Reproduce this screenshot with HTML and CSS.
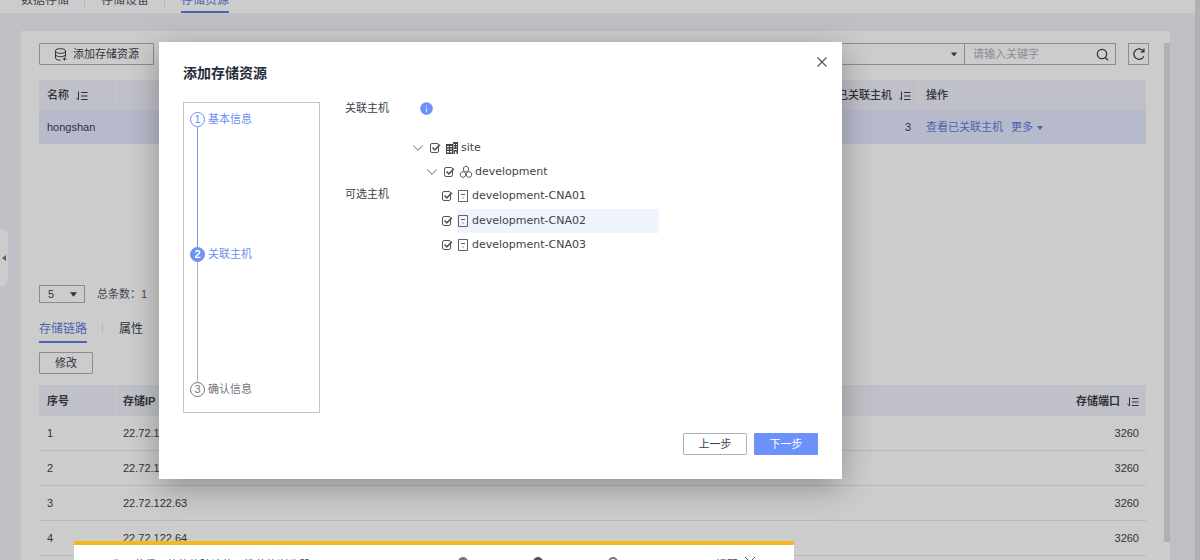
FILE: index.html
```html
<!DOCTYPE html>
<html lang="zh-CN">
<head>
<meta charset="utf-8">
<title>存储资源</title>
<link rel="stylesheet" href="styles.css">
</head>
<body>
<svg class="defs" aria-hidden="true">
  <symbol id="sort" viewBox="0 0 12 10"><path d="M2.5 0.5v8.5L0.3 6.8M5 1.5h6.5M5 5h6.5M5 8.5h6.5" fill="none" stroke="currentColor"/></symbol>
  <symbol id="caret" viewBox="0 0 6 4"><path d="M0 0h6L3 4z" fill="currentColor"/></symbol>
  <symbol id="chevron" viewBox="0 0 12 8"><path d="M1.2 1.5L6 6.3l4.8-4.8" fill="none" stroke="currentColor"/></symbol>
  <symbol id="host" viewBox="0 0 12 14"><path d="M1.5 1.5h9v11h-9z" fill="none" stroke="currentColor"/><path d="M4 5.5h4M5.4 9h1.2" fill="none" stroke="currentColor"/></symbol>
</svg>
<div class="page">
  <nav class="top-tabs">
    <a href="#data">数据存储</a><a href="#device">存储设备</a><a href="#resource" class="active">存储资源</a>
  </nav>
  <main class="workspace">
    <section class="panel">
      <div class="toolbar">
        <button class="btn add" type="button">
          <svg width="13" height="13" viewBox="0 0 13 13" fill="none" stroke="currentColor"><ellipse cx="6.5" cy="3" rx="5" ry="2.3"/><path d="M1.5 3v7c0 1.2 2 2.2 5 2.2M11.500 3v6M1.500 6.500c0 1.200 2.200 2.200 5 2.200s5-1 5-2.200M8.500 11h4M10.500 9.500v3"/></svg>
          添加存储资源
        </button>
        <div class="search">
          <button class="filter" type="button" aria-label="筛选条件"><svg width="6" height="5"><use href="#caret"/></svg></button>
          <label class="query"><input type="text" placeholder="请输入关键字" aria-label="关键字"><svg width="13" height="13" viewBox="0 0 13 13" fill="none" stroke="currentColor" stroke-width="1.200"><circle cx="6" cy="6" r="4.700"/><path d="M9.300 9.500l2.800 2.700"/></svg></label>
        </div>
        <button class="refresh" type="button" aria-label="刷新"><svg width="14" height="14" viewBox="0 0 14 14" fill="none" stroke="currentColor" stroke-width="1.200"><path d="M11.800 9.200a5.200 5.200 0 1 1-.3-4.800M12 1.500v3.300H8.600"/></svg></button>
      </div>
      <div class="upper">
        <table class="grid resources">
          <thead><tr><th>名称<svg class="sort" width="12" height="10"><use href="#sort"/></svg></th><th class="num">已关联主机<svg class="sort" width="12" height="10"><use href="#sort"/></svg></th><th class="ops">操作</th></tr></thead>
          <tbody><tr><td>hongshan</td><td class="num">3</td><td class="ops"><a href="#hosts">查看已关联主机</a><a href="#more">更多<svg class="more" width="6" height="4"><use href="#caret"/></svg></a></td></tr></tbody>
        </table>
      </div>
      <div class="pager">
        <button class="size" type="button">5<svg width="7" height="5"><use href="#caret"/></svg></button>
        <span>总条数：1</span>
      </div>
      <nav class="sub-tabs"><a href="#links" class="active">存储链路</a><a href="#props">属性</a></nav>
      <button class="btn edit" type="button">修改</button>
      <table class="grid links">
        <thead><tr><th class="index">序号</th><th>存储IP</th><th class="num">存储端口<svg class="sort" width="12" height="10"><use href="#sort"/></svg></th></tr></thead>
        <tbody>
          <tr><td>1</td><td>22.72.122.61</td><td class="num">3260</td></tr>
          <tr><td>2</td><td>22.72.122.62</td><td class="num">3260</td></tr>
          <tr><td>3</td><td>22.72.122.63</td><td class="num">3260</td></tr>
          <tr><td>4</td><td>22.72.122.64</td><td class="num">3260</td></tr>
        </tbody>
      </table>
      <div class="panel-scroll"></div>
    </section>
  </main>
  <div class="page-scroll"></div>
  <button class="handle" type="button" aria-label="展开"><svg width="4" height="6" viewBox="0 0 4 6"><path d="M4 0v6L0 3z" fill="currentColor"/></svg></button>
</div>
<div class="mask"></div>
<div class="dialog" role="dialog" aria-labelledby="dialog-title">
  <header><h1 id="dialog-title">添加存储资源</h1></header>
  <button class="close" type="button" aria-label="关闭"><svg width="10" height="10" viewBox="0 0 10 10"><path d="M.5.5l9 9M9.500.5l-9 9" fill="none" stroke="currentColor" stroke-width="1.200"/></svg></button>
  <div class="content">
    <ol class="steps">
      <li class="done"><span class="dot">1</span>基本信息</li>
      <li class="current"><span class="dot">2</span>关联主机</li>
      <li><span class="dot">3</span>确认信息</li>
    </ol>
    <div class="form">
      <div class="label">关联主机</div>
      <div class="info"><svg width="13" height="13" viewBox="0 0 13 13"><circle cx="6.500" cy="6.500" r="6.300" fill="#6c92fa"/><path d="M6.500 5.500v4.500M6.500 3v1.300" stroke="#d5e0ff" fill="none"/></svg></div>
      <div class="label tree-label">可选主机</div>
      <ul class="tree">
        <li class="level-1"><svg class="fold" width="12" height="8"><use href="#chevron"/></svg><label><input type="checkbox" checked><span class="node"><svg width="14" height="14" viewBox="0 0 14 14"><path d="M1 3h7V1h5v12H1z" fill="#434348"/><path d="M2 5h2v1H2zM5 5h2v1H5zM2 7.500h2v1H2zM5 7.500h2v1H5zM2 10h2v1.500H2zM5 10h2v1.500H5zM9 3h1v1H9zM11 3h1v1h-1zM9 5.500h1v1H9zM11 5.500h1v1h-1zM9 8h3v1H9zM10 10.500h1.500V13H10zM8 2.500h.5V13H8z" fill="#fff"/></svg>site</span></label></li>
        <li class="level-2"><svg class="fold" width="12" height="8"><use href="#chevron"/></svg><label><input type="checkbox" checked><span class="node"><svg width="14" height="14" viewBox="0 0 14 14" fill="none" stroke="currentColor"><path d="M7 1.200l2.500 1.400v3L7 7 4.500 5.600v-3zM4 6.500l2.600 1.500v3L4 12.500 1.400 11V8zM10 6.500l2.600 1.500v3L10 12.500 7.400 11V8z" stroke-linejoin="round"/></svg>development</span></label></li>
        <li class="level-3"><label><input type="checkbox" checked><span class="node"><svg width="12" height="14"><use href="#host"/></svg>development-CNA01</span></label></li>
        <li class="level-3 hovered"><label><input type="checkbox" checked><span class="node"><svg width="12" height="14"><use href="#host"/></svg>development-CNA02</span></label></li>
        <li class="level-3"><label><input type="checkbox" checked><span class="node"><svg width="12" height="14"><use href="#host"/></svg>development-CNA03</span></label></li>
      </ul>
    </div>
  </div>
  <footer><button class="btn step" type="button">上一步</button><button class="btn step primary" type="button">下一步</button></footer>
</div>
<aside class="notice">
  <span class="message">为了获得更佳的体验请使用推荐的浏览器，Chrome、Firefox</span>
  <svg width="10" height="10"><circle cx="5" cy="5" r="5" fill="#777"/></svg>
  <svg width="10" height="10"><circle cx="5" cy="5" r="5" fill="#555"/></svg>
  <svg width="10" height="10"><circle cx="5" cy="5" r="4" fill="none" stroke="#777" stroke-width="2"/></svg>
  <span class="ignore">不再提醒</span>
  <svg width="10" height="10"><path d="M0 0l10 10M10 0L0 10" stroke="#555" fill="none"/></svg>
</aside>
</body>
</html>
```
FILE: styles.css
```css
* { box-sizing: border-box; }
body {
  margin: 0;
  height: 100vh;
  overflow: hidden;
  position: relative;
  color: #3c3f48;
  font: 11px/16px "Liberation Sans", "Noto Sans CJK SC", sans-serif;
}
a { color: inherit; text-decoration: none; }
button, input { font: inherit; color: inherit; margin: 0; padding: 0; border-radius: 0; background: none; }
button { display: inline-flex; align-items: center; justify-content: center; }
svg { flex: none; }
ol, ul { margin: 0; padding: 0; list-style: none; }
.defs { position: absolute; width: 0; height: 0; }

.page { display: flex; flex-direction: column; height: 100%; background: #eef0f7; overflow: hidden; }
.top-tabs {
  display: flex;
  align-items: flex-end;
  flex: none;
  height: 13px;
  padding-left: 21px;
  gap: 32px;
  background: #fff;
  color: #575b66;
  font-size: 12px;
}
.top-tabs a { padding-bottom: 3px; line-height: 16px; border-bottom: 2px solid transparent; }
.top-tabs .active, .sub-tabs .active { color: #5e7de0; border-bottom-color: #5e7de0; }

.workspace { flex: 1; min-height: 0; padding: 18px 30px 0 21px; }
.panel { position: relative; height: 100%; padding: 12px 24px 0 18px; background: #fff; overflow: hidden; }
.panel-scroll { position: absolute; top: 12px; right: 0; bottom: 18px; width: 6px; background: #dcdddd; }
.page-scroll { position: absolute; top: 0; right: 0; bottom: 0; width: 5px; background: #dedede; }
.handle {
  position: absolute;
  top: 228px;
  left: 0;
  width: 8px;
  height: 59px;
  border: 0;
  border-radius: 0 8px 8px 0;
  background: #fff;
  color: #777;
}

.btn { height: 22px; border: 1px solid #adb0b8; border-radius: 1px; }
.toolbar { display: flex; align-items: center; margin-right: -3px; color: #3c3f48; }
.add { width: 115px; gap: 6px; }
.search { display: flex; width: 360px; height: 22px; margin-left: auto; border: 1px solid #adb0b8; }
.filter { flex: 1; justify-content: flex-end; padding-right: 7px; border: 0; border-right: 1px solid #adb0b8; }
.query { display: flex; align-items: center; width: 150px; padding: 0 6px 0 8px; }
.query input { flex: 1; min-width: 0; border: 0; outline: 0; }
.query input::placeholder { color: #abb0bb; opacity: 1; }
.refresh { width: 21px; height: 22px; margin-left: 12px; border: 1px solid #adb0b8; }

.upper { min-height: 205px; padding-top: 15px; }
.grid { width: 100%; border-collapse: separate; border-spacing: 0; table-layout: fixed; }
.grid th { height: 30px; padding: 0 8px; text-align: left; background: #f0f2fa; font-weight: bold; }
.grid th + th { border-left: 1px solid #f7f8fc; padding-left: 7px; }
.grid td { height: 35px; padding: 0 8px; }
.grid .num { text-align: right; padding-right: 7px; }
.resources th { font-weight: 500; }
.resources th:first-child { width: 76px; }
.resources td { background: #e5e9fe; height: 34px; }
.resources .ops { width: 228px; }
.ops a { margin-right: 8px; color: #5e7de0; }
.more { margin-left: 4px; vertical-align: 1px; }
.sort { margin-left: 7px; vertical-align: -2px; }
.links .index { width: 76px; }
.links th { height: 31px; }
.links th.num { border-left-color: transparent; }
.links td { border-bottom: 1px solid #e6e7eb; }

.pager { display: flex; align-items: center; height: 18px; gap: 12px; margin-top: 15px; color: #575b66; }
.size { width: 46px; height: 18px; justify-content: space-between; padding: 0 7px 0 8px; border: 1px solid #adb0b8; color: #3c3f48; }
.sub-tabs { display: flex; gap: 32px; margin: 15px 0 9px; font-size: 12px; }
.sub-tabs a { padding: 3px 0 4px; border-bottom: 2px solid transparent; }
.edit { width: 54px; margin-bottom: 11px; }

.top-tabs a + a, .sub-tabs a + a { position: relative; }
.top-tabs a + a::before, .sub-tabs a + a::before {
  content: "";
  position: absolute;
  left: -17px;
  top: 5px;
  width: 1px;
  height: 10px;
  background: #dfe1e6;
}

.mask { position: absolute; inset: 0; background: rgba(0, 0, 0, .2); }
.dialog {
  position: absolute;
  top: 42px;
  left: 159px;
  right: 358px;
  padding: 22px 24px 24px;
  background: #fff;
  box-shadow: 0 8px 30px rgba(0, 0, 0, .3);
}
.dialog h1 { margin: 0; font-size: 14px; line-height: 18px; color: #252b3a; }
.close { position: absolute; top: 12px; right: 12px; width: 16px; height: 16px; border: 0; color: #555; }
.content { display: flex; gap: 25px; margin-top: 20px; }
.steps { flex: none; width: 137px; min-height: 311px; padding: 9px 6px; border: 1px solid #c4c5c9; }
.steps li { position: relative; display: flex; gap: 3px; height: 135px; line-height: 15px; color: #717580; }
.steps li:last-child { height: 15px; }
.steps li:not(:last-child)::after { content: ""; position: absolute; left: 7px; top: 15px; bottom: 0; width: 1px; background: #b0b2b8; }
.steps .done:not(:last-child)::after { background: #7890e8; }
.steps .done, .steps .current { color: #6d8df2; }
.dot { display: flex; align-items: center; justify-content: center; width: 15px; height: 15px; border: 1px solid currentColor; border-radius: 50%; }
.current .dot { border-color: #6c92fa; background: #6c92fa; color: #fff; font-weight: bold; }

.form { flex: 1; display: grid; grid-template-columns: 67px 1fr; align-content: start; row-gap: 21px; }
.label { line-height: 13px; color: #3c3f48; }
.info { display: flex; padding-left: 8px; }
.tree-label { padding-top: 52px; }
.tree { font-family: "DejaVu Sans", sans-serif; width: 247px; color: #404248; }
.tree li { display: flex; align-items: center; height: 24px; }
.tree li.hovered { height: 25px; }
.tree label { display: flex; align-items: center; flex: 1; gap: 4px; }
.tree input {
  appearance: none;
  width: 12px;
  height: 12px;
  background: url("data:image/svg+xml,%3Csvg xmlns='http://www.w3.org/2000/svg' viewBox='0 0 12 12' fill='none' stroke='%23555'%3E%3Crect x='1.500' y='1.500' width='8' height='9' rx='1.500'/%3E%3Cpath d='M3.500 5.500l2.300 2.400L11 2.700' stroke-width='1.600'/%3E%3C/svg%3E");
}
.node { display: flex; align-items: center; flex: 1; height: 24px; gap: 2px; }
.node svg { color: #606268; }
.fold { margin-right: 5px; color: #666; }
.level-2 { padding-left: 14px; }
.level-3 { padding-left: 29px; }
.level-3 .node { gap: 3px; }
.hovered .node { background: #eef3fe; }
.dialog footer { display: flex; justify-content: flex-end; gap: 7px; margin-top: 20px; }
.step { width: 64px; }
.primary { border-color: #6c92fa; background: #6c92fa; color: #fff; }

.notice {
  position: absolute;
  left: 74px;
  bottom: 0;
  display: flex;
  align-items: flex-start;
  width: 60%;
  height: 19px;
  padding: 12px 0 0 38px;
  border-top: 4px solid #f5b81c;
  background: #fff;
  overflow: hidden;
  white-space: nowrap;
}
.notice .message { flex: none; width: 346px; }
.notice svg { margin-right: 65px; }
.notice .ignore { flex: none; width: 44px; margin: 0 7px 0 11px; }
```
